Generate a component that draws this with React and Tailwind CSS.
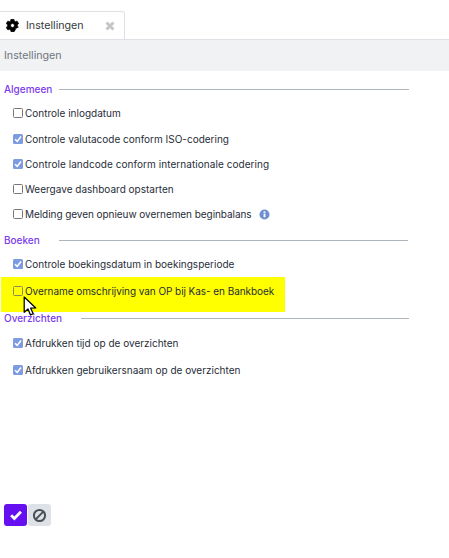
const font = { fontFamily: '"Inter", "Noto Sans", sans-serif' };

function Box({ checked }) {
  return checked ? (
    <span className="flex h-[10px] w-[10px] shrink-0 items-center justify-center rounded-[1.5px] bg-[#7c9be0]">
      <svg viewBox="0 0 10 10" className="h-[10px] w-[10px]"><path d="M2 5.2 L4.2 7.4 L8 2.4" fill="none" stroke="#fff" strokeWidth="1.6" /></svg>
    </span>
  ) : (
    <span className="h-[10px] w-[10px] shrink-0 rounded-[1.5px] border border-[#767676] bg-white" />
  );
}

function Row({ checked, children, className = "", clear }) {
  return (
    <div className={`flex items-center pl-[13px] text-[10px] leading-[14px] text-[#272d38] ${className}`}>
      {clear ? <span className="h-[10px] w-[10px] shrink-0 rounded-[1.5px] border border-[#8a8a55]" /> : <Box checked={checked} />}
      <span className="ml-[2px] whitespace-nowrap">{children}</span>
    </div>
  );
}

function Heading({ children, lineLeft, lineRight, className = "" }) {
  return (
    <div className={`flex h-[14px] items-center pl-[4px] text-[10px] font-medium text-[#7c3aed] ${className}`}>
      <span className="whitespace-nowrap" style={{ width: lineLeft - 4 }}>{children}</span>
      <span className="h-[1px] bg-[#adb5bd]" style={{ width: lineRight - lineLeft }} />
    </div>
  );
}

export default function App() {
  return (
    <div className="relative h-[558px] w-[449px] overflow-hidden bg-white" style={font}>
      <div className="flex h-[39px] items-end">
        <div className="flex h-[28px] w-[125px] items-center rounded-tr-[3px] border-r border-t border-[#dee2e6] bg-white pl-[6px]">
          <svg viewBox="0 0 512 512" className="h-[13px] w-[13px]" fill="#000" stroke="#000" strokeWidth="30">
            <path d="M487 316l-43-25a196 196 0 0 0 0-70l43-25c5-3 7-9 5-14a249 249 0 0 0-55-95c-4-4-10-5-15-2l-43 25a192 192 0 0 0-61-35V25c0-6-4-11-9-12a252 252 0 0 0-110 0c-6 1-10 6-10 12v50a198 198 0 0 0-61 35L86 85c-5-3-11-2-15 2a248 248 0 0 0-55 95c-2 5 0 11 5 14l43 25a196 196 0 0 0 0 70l-43 25c-5 3-7 9-5 14 11 36 30 68 55 95 4 4 10 5 15 2l43-25a192 192 0 0 0 61 35v50c0 6 4 11 9 12a252 252 0 0 0 110 0c6-1 10-6 10-12v-50a198 198 0 0 0-61 35l43 25c5 3 11 2 15-2a248 248 0 0 0 55-95c2-5 0-11-5-14zM256 336a80 80 0 1 1 0-160 80 80 0 0 1 0 160z" />
          </svg>
          <span className="ml-[7px] pt-[2px] text-[10.7px] text-[#343a40]">Instellingen</span>
          <svg viewBox="0 0 10 10" className="ml-[21px] h-[10px] w-[10px]"><path d="M1.5 1.5 L8.5 8.5 M8.5 1.5 L1.5 8.5" stroke="#c4c6c8" strokeWidth="3" /></svg>
        </div>
      </div>
      <div className="flex h-[32px] items-center border-t border-[#dee2e6] bg-[#f1f2f4] pl-[4px] pt-[2px] text-[10.7px] text-[#6c757d]">Instellingen</div>

      <Heading lineLeft={59} lineRight={409} className="mt-[11px]">Algemeen</Heading>
      <Row className="mt-[10px]">Controle inlogdatum</Row>
      <Row checked className="mt-[12px]">Controle valutacode conform ISO-codering</Row>
      <Row checked className="mt-[11px] tracking-[0.06px]">Controle landcode conform internationale codering</Row>
      <Row className="mt-[11px]">Weergave dashboard opstarten</Row>
      <Row className="mt-[11px]">
        <span className="flex items-center tracking-[-0.06px]">
          Melding geven opnieuw overnemen beginbalans
          <svg viewBox="0 0 12 12" className="ml-[7px] h-[11px] w-[11px]">
            <circle cx="6" cy="6" r="5.5" fill="#6f8fd0" />
            <rect x="5" y="5" width="2" height="4" fill="#fff" />
            <rect x="5" y="2.6" width="2" height="1.6" fill="#fff" />
          </svg>
        </span>
      </Row>
      <Heading lineLeft={59} lineRight={408} className="mt-[12px]">Boeken</Heading>
      <Row checked className="mt-[10px]">Controle boekingsdatum in boekingsperiode</Row>
      <div className="ml-[1px] mt-[6px] flex h-[35px] w-[284px] items-center bg-[#ffff00]">
        <Row clear className="-ml-[1px] -mt-[8px] tracking-[-0.06px]">Overname omschrijving van OP bij Kas- en Bankboek</Row>
      </div>
      <Heading lineLeft={81} lineRight={409} className="-mt-[1px]">Overzichten</Heading>
      <Row checked className="mt-[11px]">Afdrukken tijd op de overzichten</Row>
      <Row checked className="mt-[13px]">Afdrukken gebruikersnaam op de overzichten</Row>

      <div className="absolute left-[4px] top-[504px] flex gap-[1px]">
        <div className="flex h-[22px] w-[23px] items-center justify-center rounded-[3px] bg-[#6610f2]">
          <svg viewBox="0 0 12 12" className="h-[14px] w-[14px]"><path d="M1.8 6.2 L4.6 9 L10.2 3.2" fill="none" stroke="#fff" strokeWidth="2.4" /></svg>
        </div>
        <div className="flex h-[22px] w-[23px] items-center justify-center rounded-[3px] bg-[#dee2e6]">
          <svg viewBox="0 0 14 14" className="h-[15px] w-[15px]" fill="none" stroke="#495057" strokeWidth="1.9"><circle cx="7" cy="7" r="5.2" /><path d="M3.4 10.6 L10.6 3.4" /></svg>
        </div>
      </div>

      <svg viewBox="0 0 14 20" className="absolute left-[23px] top-[296px] h-[21px] w-[15px]">
        <path d="M1 1 L1 15.5 L4.6 12.4 L7 18 L9.6 16.9 L7.2 11.6 L12 11.4 Z" fill="#fff" stroke="#000" strokeWidth="1.2" strokeLinejoin="round" />
      </svg>
    </div>
  );
}
